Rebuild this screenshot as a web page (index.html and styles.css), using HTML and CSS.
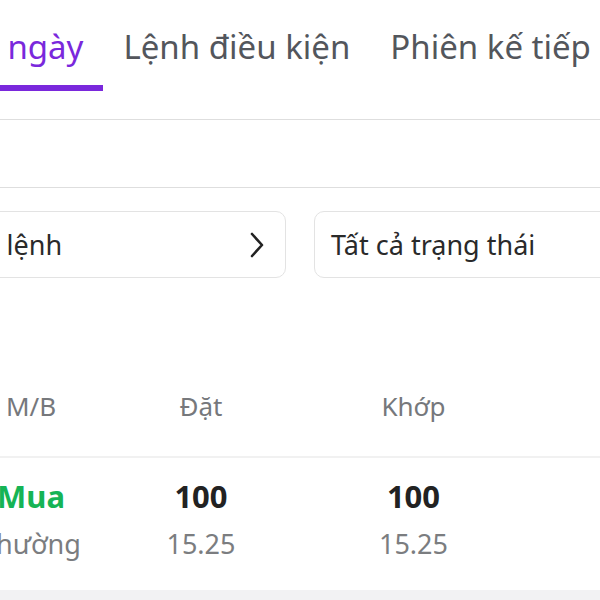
FILE: index.html
```html
<!DOCTYPE html>
<html lang="vi">
<head>
<meta charset="utf-8">
<link rel="stylesheet" href="styles.css">
</head>
<body>
<div class="page">
  <div class="tabs">
    <div class="tab active">Lệnh trong ngày</div>
    <div class="tab">Lệnh điều kiện</div>
    <div class="tab">Phiên kế tiếp</div>
  </div>
  <div class="date-band"></div>
  <div class="filters">
    <div class="select select-left">
      <span>Loại lệnh</span>
      <svg class="chev" width="20" height="28" viewBox="0 0 20 28"><path d="M5 3 L15 14 L5 25" fill="none" stroke="#222" stroke-width="2.6" stroke-linecap="round" stroke-linejoin="round"/></svg>
    </div>
    <div class="select select-right">
      <span>Tất cả trạng thái</span>
    </div>
  </div>
  <div class="table">
    <div class="thead">
      <div class="c1">M/B</div>
      <div class="c2">Đặt</div>
      <div class="c3">Khớp</div>
    </div>
    <div class="trow">
      <div class="c1"><div class="buy">Mua</div><div class="sub">Thường</div></div>
      <div class="c2"><div class="qty">100</div><div class="sub">15.25</div></div>
      <div class="c3"><div class="qty">100</div><div class="sub">15.25</div></div>
    </div>
  </div>
  <div class="bottom-band"></div>
</div>
</body>
</html>
```
FILE: styles.css
```css
html, body {
  margin: 0;
  padding: 0;
  background: #ffffff;
}
body {
  font-family: "Noto Sans", "Open Sans", sans-serif;
  width: 600px;
  height: 600px;
  overflow: hidden;
}
.page {
  width: 600px;
  height: 600px;
  overflow: hidden;
  display: flex;
  flex-direction: column;
}
.tabs {
  display: flex;
  flex-shrink: 0;
  margin-left: -192px;
  margin-right: -300px;
  padding-bottom: 28px;
  border-bottom: 1px solid #dedede;
}
.tab {
  font-size: 33px;
  color: #53565c;
  padding: 28px 20px 0;
  height: 57px;
  line-height: 38px;
  border-bottom: 6px solid transparent;
  white-space: nowrap;
}
.tab.active {
  color: #7a28dc;
  border-bottom-color: #7a28dc;
}
.date-band {
  height: 67px;
  flex-shrink: 0;
  border-bottom: 1px solid #dedede;
}
.filters {
  display: flex;
  gap: 28px;
  padding-top: 23px;
  margin-left: -54px;
  margin-right: -500px;
  flex-shrink: 0;
}
.select {
  height: 65px;
  border: 1px solid #e3e3e3;
  border-radius: 10px;
  display: flex;
  align-items: center;
  font-size: 27px;
  color: #2a2a2a;
}
.select-left {
  width: 320px;
  justify-content: space-between;
  padding: 0 18px 0 0;
}
.select-right {
  width: 400px;
  padding-left: 16px;
}
.chev {
  display: block;
}
.table {
  margin-left: -33px;
  padding-top: 78px;
  flex-shrink: 0;
}
.thead, .trow {
  display: grid;
  grid-template-columns: 128px 212px 213px 1fr;
}
.thead {
  height: 100px;
  align-items: center;
  font-size: 26px;
  color: #76787c;
  border-bottom: 2px solid #f1f1f1;
}
.c1, .c2, .c3 {
  text-align: center;
}
.trow {
  padding-top: 18px;
  height: 114px;
}
.buy {
  color: #16b455;
  font-weight: 700;
  font-size: 31px;
  line-height: 40px;
}
.qty {
  color: #222222;
  font-weight: 700;
  font-size: 31px;
  line-height: 40px;
}
.sub {
  color: #7b7d80;
  font-size: 27px;
  line-height: 36px;
  margin-top: 10px;
}
.bottom-band {
  flex: 1;
  background: #f2f2f3;
}
```
